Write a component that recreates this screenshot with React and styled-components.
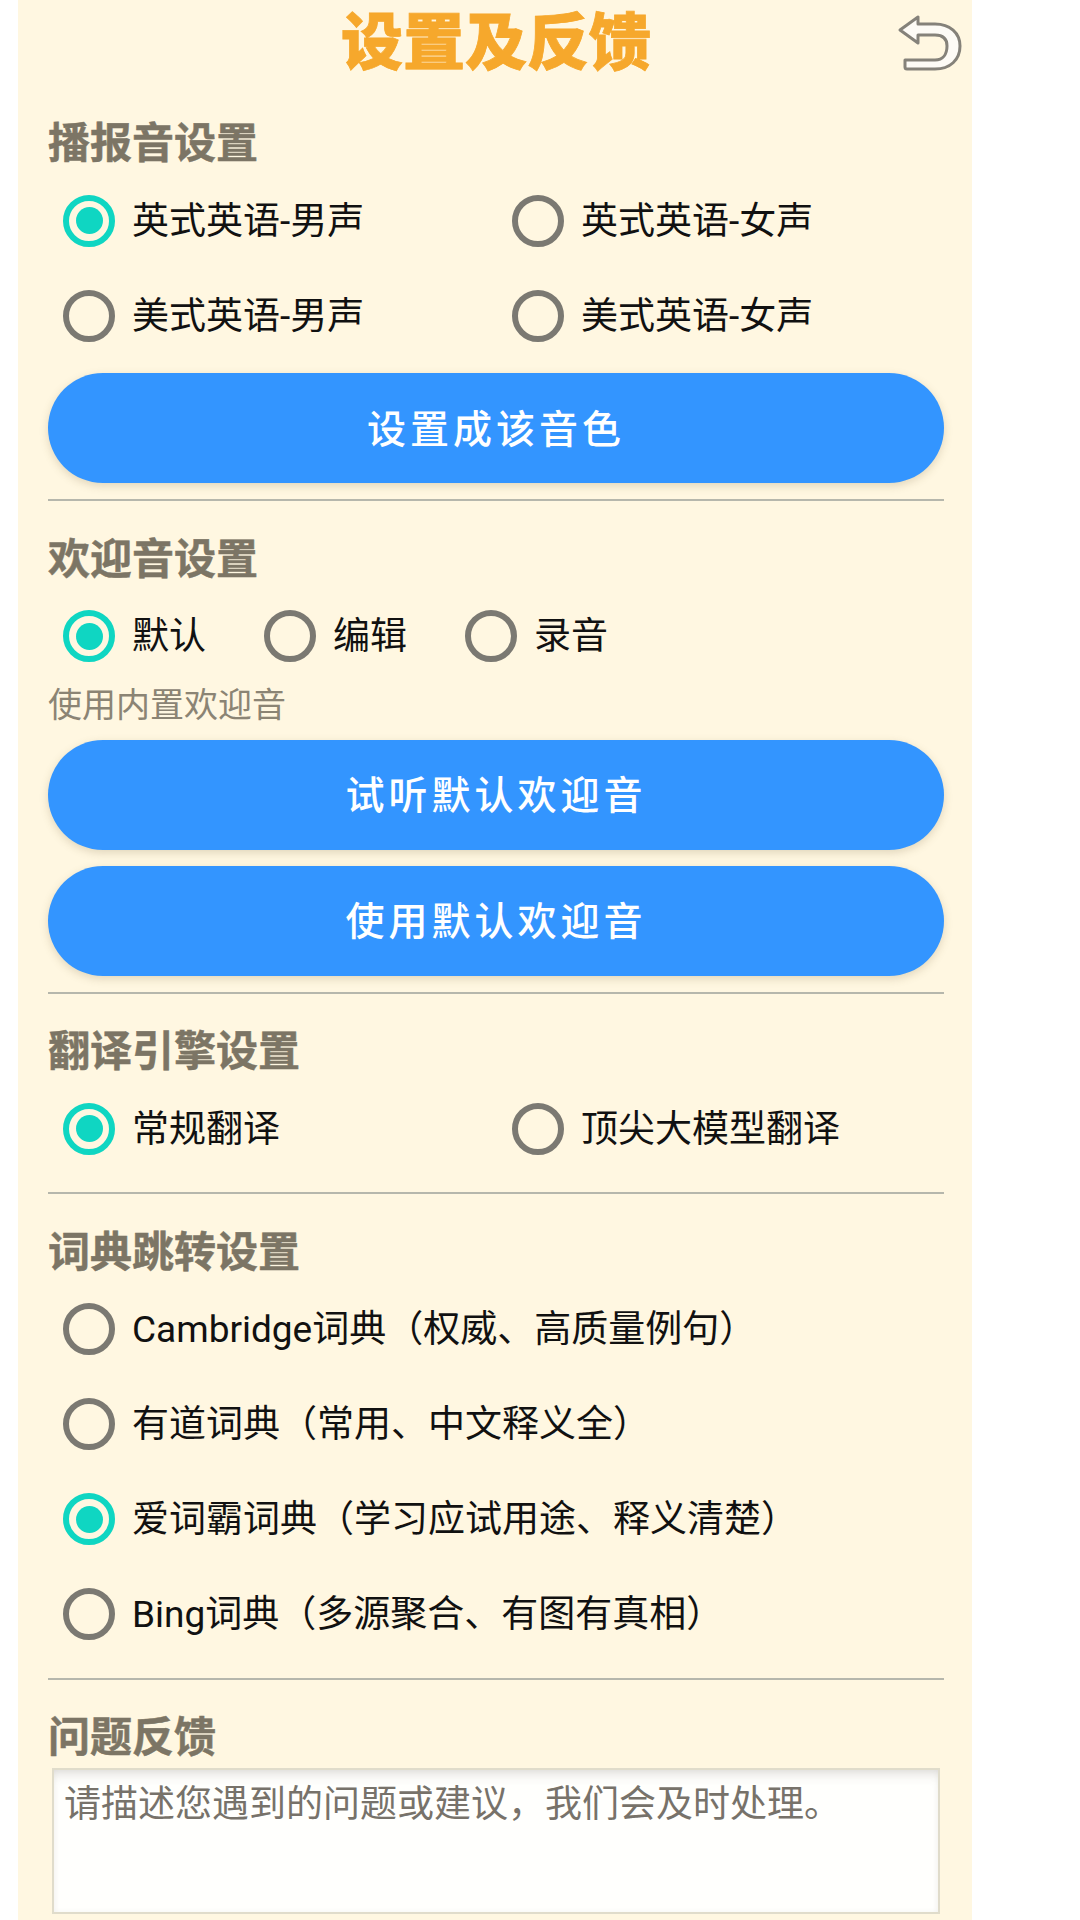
import styled, { createGlobalStyle } from 'styled-components'

const FONT = `Roboto, "Noto Sans CJK SC", sans-serif`

const GlobalStyle = createGlobalStyle`
    html, body {
        margin: 0;
        padding: 0;
        background: #ffffff;
    }
    * {
        box-sizing: border-box;
    }
`

function Radio({ label, checked }) {
    return (
        <RadioItem>
            <RadioCircle $checked={checked} />
            <RadioLabel>{label}</RadioLabel>
        </RadioItem>
    )
}

function BackIcon() {
    return (
        <svg width="68" height="62" viewBox="36 12 68 62">
            <path
                d="M40 30 L58 17 L58 24 L75 24 C90 24 100 33 100 46 C100 60 90 69 75 69 L47 69 Q45 69 45 67 L45 60 L75 60 C83 60 87 54 87 46 C87 39 83 35 75 35 L58 35 L58 43 Z"
                fill="#fdfbf6"
                stroke="#85827a"
                strokeWidth="3"
                strokeLinejoin="round"
            />
        </svg>
    )
}

function App() {
    return (
        <Panel>
            <GlobalStyle />
            <Header>
                <span />
                <Title>设置及反馈</Title>
                <BackButton>
                    <BackIcon />
                </BackButton>
            </Header>

            <SectionTitle $top={28}>播报音设置</SectionTitle>
            <TwoColumns>
                <Radio label="英式英语-男声" checked />
                <Radio label="英式英语-女声" />
                <Radio label="美式英语-男声" />
                <Radio label="美式英语-女声" />
            </TwoColumns>
            <PillButton $top={10}>设置成该音色</PillButton>
            <Divider />

            <SectionTitle>欢迎音设置</SectionTitle>
            <ThreeColumns>
                <Radio label="默认" checked />
                <Radio label="编辑" />
                <Radio label="录音" />
            </ThreeColumns>
            <Hint>使用内置欢迎音</Hint>
            <PillButton $top={13}>试听默认欢迎音</PillButton>
            <PillButton $top={16}>使用默认欢迎音</PillButton>
            <Divider />

            <SectionTitle>翻译引擎设置</SectionTitle>
            <TwoColumns>
                <Radio label="常规翻译" checked />
                <Radio label="顶尖大模型翻译" />
            </TwoColumns>
            <Divider />

            <SectionTitle>词典跳转设置</SectionTitle>
            <Stack>
                <Radio label="Cambridge词典（权威、高质量例句）" />
                <Radio label="有道词典（常用、中文释义全）" />
                <Radio label="爱词霸词典（学习应试用途、释义清楚）" checked />
                <Radio label="Bing词典（多源聚合、有图有真相）" />
            </Stack>
            <Divider />

            <SectionTitle>问题反馈</SectionTitle>
            <Feedback placeholder="请描述您遇到的问题或建议，我们会及时处理。" />
        </Panel>
    )
}

export default App

const Panel = styled.main`
    width: 954px;
    height: 1920px;
    margin-left: 18px;
    padding: 0 28px 0 30px;
    overflow: hidden;
    background: #fff7e1;
    font-family: ${FONT};
`

const Header = styled.header`
    display: grid;
    grid-template-columns: 1fr auto 1fr;
    align-items: center;
    height: 88px;
`

const Title = styled.h1`
    margin: 0;
    color: #f6a82c;
    font-size: 62px;
    line-height: 88px;
    font-weight: 900;
    -webkit-text-stroke: 0.8px #f6a82c;
`

const BackButton = styled.div`
    justify-self: end;
    display: flex;
    margin-right: -20px;
    margin-top: -2px;
`

const SectionTitle = styled.h2`
    margin: ${(props) => props.$top ?? 30.6}px 0 0;
    height: 56px;
    color: #7c7565;
    font-size: 42px;
    line-height: 56px;
    font-weight: 700;
    -webkit-text-stroke: 0.5px #7c7565;
`

const TwoColumns = styled.div`
    display: grid;
    grid-template-columns: 449px 1fr;
    grid-auto-rows: 95px;
    padding-left: 15px;
    margin-top: 1px;
`

const ThreeColumns = styled.div`
    display: grid;
    grid-template-columns: 201px 201px 201px;
    grid-auto-rows: 95px;
    padding-left: 15px;
    margin-top: 1px;
`

const Stack = styled.div`
    display: flex;
    flex-direction: column;
    padding-left: 15px;
    margin-top: 1px;
`

const RadioItem = styled.label`
    display: flex;
    align-items: center;
    gap: 17px;
    height: 95px;
`

const RadioCircle = styled.span`
    flex: none;
    width: 52px;
    height: 52px;
    border-radius: 50%;
    border: 6px solid ${(props) => (props.$checked ? '#0fd6c2' : '#7b7972')};
    display: flex;
    align-items: center;
    justify-content: center;

    &::after {
        content: '';
        display: ${(props) => (props.$checked ? 'block' : 'none')};
        width: 27px;
        height: 27px;
        border-radius: 50%;
        background: #0fd6c2;
    }
`

const RadioLabel = styled.span`
    padding-top: 2px;
    color: #111111;
    font-size: 37px;
    line-height: 50px;
    white-space: nowrap;
`

const Hint = styled.p`
    margin: -1px 0 0;
    height: 44px;
    color: #8b8474;
    font-size: 34px;
    line-height: 44px;
`

const PillButton = styled.div`
    display: flex;
    align-items: center;
    justify-content: center;
    width: 896px;
    height: 110px;
    margin-top: ${(props) => props.$top}px;
    padding-bottom: 5px;
    border-radius: 55px;
    background: #3395ff;
    color: #ffffff;
    font-size: 39px;
    font-weight: 500;
    letter-spacing: 4px;
    box-shadow: 0 3px 8px rgba(120, 100, 60, 0.22);
`

const Divider = styled.hr`
    width: 896px;
    height: 2px;
    margin: 16px 0 0;
    border: none;
    background: #b6b7ac;
`

const Feedback = styled.textarea`
    display: block;
    width: 888px;
    height: 146px;
    margin: 2px 0 0 4px;
    padding: 10px 10px;
    border: 2px solid #e0dccb;
    border-radius: 0;
    outline: none;
    resize: none;
    background: #fffffd;
    box-shadow: inset 0 10px 12px -6px rgba(90, 80, 70, 0.18), inset 0 0 5px rgba(90, 80, 70, 0.06);
    font-family: ${FONT};
    font-size: 37px;
    line-height: 50px;

    &::placeholder {
        color: #77726a;
        opacity: 1;
    }
`
